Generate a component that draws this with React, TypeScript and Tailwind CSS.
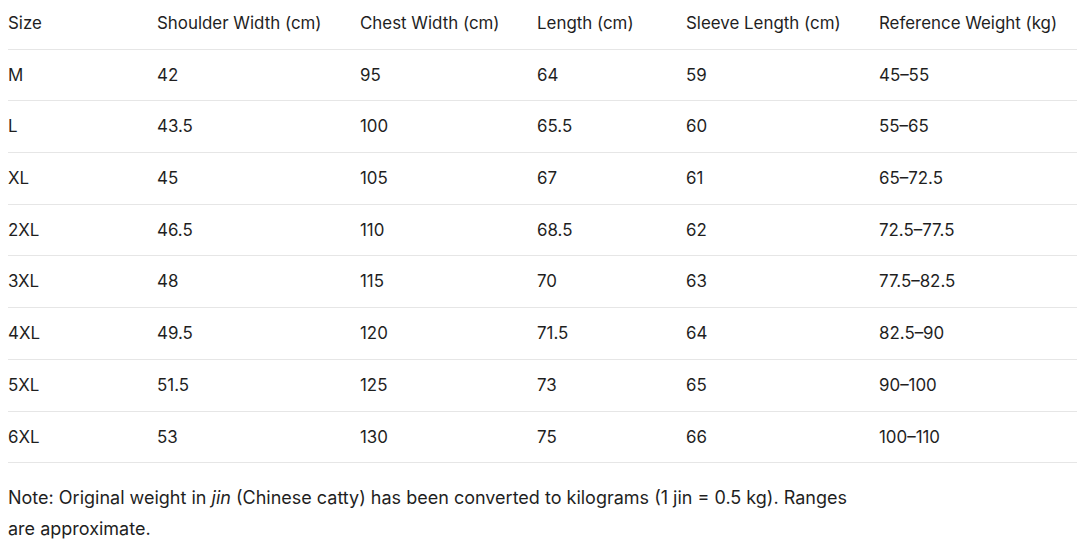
import React from 'react';

const HEADERS = [
  'Size',
  'Shoulder Width (cm)',
  'Chest Width (cm)',
  'Length (cm)',
  'Sleeve Length (cm)',
  'Reference Weight (kg)',
];

const ROWS = [
  ['M', '42', '95', '64', '59', '45–55'],
  ['L', '43.5', '100', '65.5', '60', '55–65'],
  ['XL', '45', '105', '67', '61', '65–72.5'],
  ['2XL', '46.5', '110', '68.5', '62', '72.5–77.5'],
  ['3XL', '48', '115', '70', '63', '77.5–82.5'],
  ['4XL', '49.5', '120', '71.5', '64', '82.5–90'],
  ['5XL', '51.5', '125', '73', '65', '90–100'],
  ['6XL', '53', '130', '75', '66', '100–110'],
];

const COL_WIDTHS = ['w-[149px]', 'w-[203px]', 'w-[177px]', 'w-[149px]', 'w-[193px]', 'w-[198px]'];

export default function App() {
  return (
    <div className="bg-white text-[#1f1f1f] font-['Inter',sans-serif] min-h-[549px] px-2">
      <table className="w-[1069px] border-collapse table-fixed -mt-[2px] text-[16.9px]">
        <colgroup>
          {COL_WIDTHS.map((w, i) => (
            <col key={i} className={w} />
          ))}
        </colgroup>
        <thead>
          <tr className="border-b border-[#e6e6e6]">
            {HEADERS.map((h) => (
              <th key={h} className="text-left font-normal py-3 leading-[26.6px] pr-2">
                {h}
              </th>
            ))}
          </tr>
        </thead>
        <tbody>
          {ROWS.map((row) => (
            <tr key={row[0]} className="border-b border-[#e6e6e6]">
              {row.map((cell, i) => (
                <td key={i} className="py-3 leading-[26.7px] pr-2">
                  {cell}
                </td>
              ))}
            </tr>
          ))}
        </tbody>
      </table>
      <p className="mt-[19px] max-w-[862px] text-[18px] leading-[31px]">
        Note: Original weight in <em>jin</em> (Chinese catty) has been converted to kilograms (1 jin = 0.5 kg). Ranges are approximate.
      </p>
    </div>
  );
}
